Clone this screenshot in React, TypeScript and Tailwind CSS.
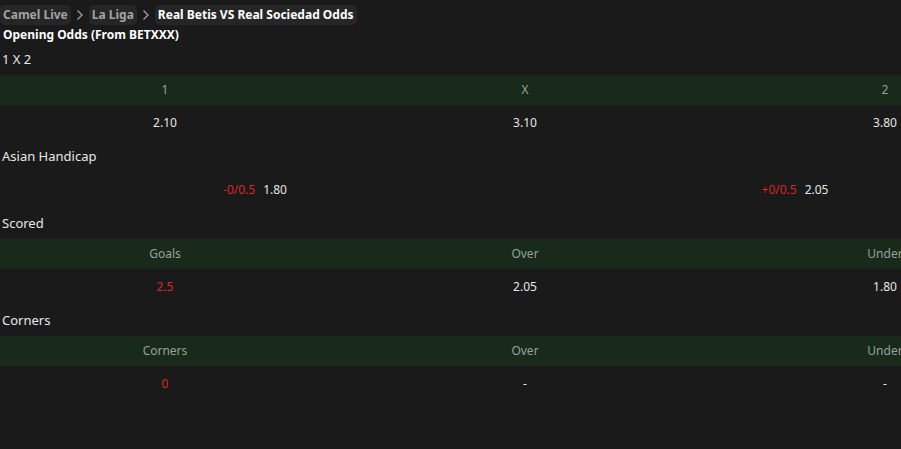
import React from 'react';

type Cell = { text: string; red?: boolean };

const Title: React.FC<{ children: React.ReactNode }> = ({ children }) => (
  <div className="h-[31px] flex items-center px-[2px] text-[13px] text-[#e8e8e8]">{children}</div>
);

const HeaderRow: React.FC<{ cells: string[] }> = ({ cells }) => (
  <div className="bg-[#1a2a1a]">
    <div className="grid grid-cols-3 w-[1080px] -ml-[15px] h-[30px] items-center text-[12px] text-[#93a29c]">
      {cells.map((c, i) => (
        <div key={i} className="text-center">
          {c}
        </div>
      ))}
    </div>
  </div>
);

const DataRow: React.FC<{ cells: Cell[] }> = ({ cells }) => (
  <div className="grid grid-cols-3 w-[1080px] -ml-[15px] h-[36px] items-center text-[12px]">
    {cells.map((c, i) => (
      <div key={i} className={c.red ? 'text-center text-[#dc2626]' : 'text-center text-[#e6e6e6]'}>
        {c.text}
      </div>
    ))}
  </div>
);

const Handicap: React.FC<{ line: string; odds: string }> = ({ line, odds }) => (
  <div className="flex justify-center gap-[8px]">
    <span className="text-[#dc2626]">{line}</span>
    <span className="text-[#e6e6e6]">{odds}</span>
  </div>
);

const Crumb: React.FC<{ label: string; active?: boolean }> = ({ label, active }) => (
  <span
    className={
      active
        ? 'h-[20px] px-[3px] flex items-center rounded-[5px] bg-[#262626] text-white'
        : 'h-[20px] px-[3px] flex items-center rounded-[5px] bg-[#262626] text-[#a3a3a3]'
    }
  >
    {label}
  </span>
);

const Chevron = () => (
  <svg width="18" height="14" viewBox="0 0 18 14" className="text-[#9a9a9a]">
    <path d="M6.5 2.5 L11 7 L6.5 11.5" fill="none" stroke="currentColor" strokeWidth="1.4" />
  </svg>
);

export default function App() {
  return (
    <div
      className="w-[901px] h-[449px] overflow-hidden bg-[#1a1a1a] text-white"
      style={{ fontFamily: '"Noto Sans", "Open Sans", sans-serif' }}
    >
      <div className="pt-[5px] flex items-center text-[12px] font-bold">
        <Crumb label="Camel Live" />
        <Chevron />
        <Crumb label="La Liga" />
        <Chevron />
        <Crumb label="Real Betis VS Real Sociedad Odds" active />
      </div>
      <div className="px-[3px] h-[19px] flex items-center text-[12px] font-bold text-white">
        Opening Odds (From BETXXX)
      </div>

      <Title>1 X 2</Title>
      <HeaderRow cells={['1', 'X', '2']} />
      <DataRow cells={[{ text: '2.10' }, { text: '3.10' }, { text: '3.80' }]} />

      <Title>Asian Handicap</Title>
      <div className="grid grid-cols-2 w-[1080px] -ml-[15px] h-[36px] items-center text-[12px]">
        <Handicap line="-0/0.5" odds="1.80" />
        <Handicap line="+0/0.5" odds="2.05" />
      </div>

      <Title>Scored</Title>
      <HeaderRow cells={['Goals', 'Over', 'Under']} />
      <DataRow cells={[{ text: '2.5', red: true }, { text: '2.05' }, { text: '1.80' }]} />

      <Title>Corners</Title>
      <HeaderRow cells={['Corners', 'Over', 'Under']} />
      <DataRow cells={[{ text: '0', red: true }, { text: '-' }, { text: '-' }]} />
    </div>
  );
}
